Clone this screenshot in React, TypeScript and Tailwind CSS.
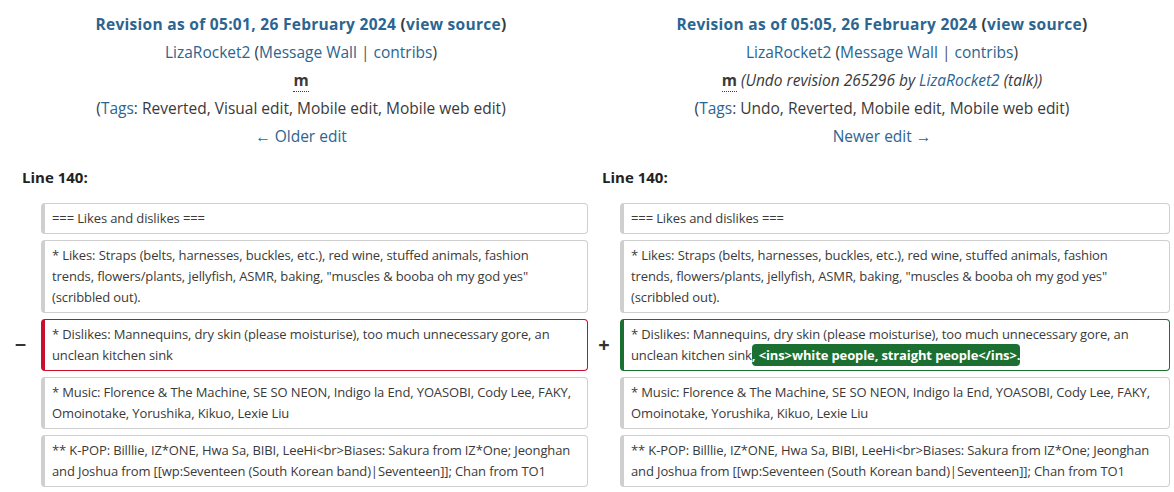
import React from "react";

type Side = {
  date: string;
  summary?: boolean;
  tags: string;
  nav: string;
};

const LINK = "text-[#2b6590]";

const left: Side = {
  date: "05:01, 26 February 2024",
  tags: "Reverted, Visual edit, Mobile edit, Mobile web edit",
  nav: "← Older edit",
};

const right: Side = {
  date: "05:05, 26 February 2024",
  summary: true,
  tags: "Undo, Reverted, Mobile edit, Mobile web edit",
  nav: "Newer edit →",
};

const RevisionHeader = ({ side, width }: { side: Side; width: string }) => (
  <div className={`${width} text-center text-[15.5px] leading-[28px] text-[#3a3a3a]`}>
    <div className="font-bold tracking-[0.3px]">
      <span className={LINK}>Revision as of {side.date}</span> (
      <span className={LINK}>view source</span>)
    </div>
    <div>
      <span className={LINK}>LizaRocket2</span> (<span className={LINK}>Message Wall</span>{" "}
      <span className="text-[#555]">|</span> <span className={LINK}>contribs</span>)
    </div>
    <div>
      <abbr className="font-bold no-underline border-b border-dotted border-[#3a3a3a]" title="minor">
        m
      </abbr>
      {side.summary && (
        <span className="italic">
          {" "}
          (Undo revision 265296 by <span className={LINK}>LizaRocket2</span> (talk))
        </span>
      )}
    </div>
    <div>
      (<span className={LINK}>Tags</span>: {side.tags})
    </div>
    <div className={LINK}>{side.nav}</div>
  </div>
);

type Kind = "ctx" | "del" | "add";

const boxStyles: Record<Kind, string> = {
  ctx: "border-[#cfcfcf] border-l-[#cfcfcf]",
  del: "border-[#c8102e] border-l-[#c8102e]",
  add: "border-[#1b6f31] border-l-[#1b6f31]",
};

const Box = ({ kind, children }: { kind: Kind; children: React.ReactNode }) => (
  <div
    className={`rounded-[4px] border border-l-4 px-[7px] py-[4px] text-[13px] leading-[21px] tracking-[-0.12px] text-[#3a3a3a] ${boxStyles[kind]}`}
  >
    {children}
  </div>
);

// lines are broken where the wiki diff wraps them
const Lines = ({ lines }: { lines: string[] }) => (
  <>
    {lines.map((l, i) => (
      <span key={i} className="block whitespace-nowrap">
        {l}
      </span>
    ))}
  </>
);

const Marker = ({ sign }: { sign?: string }) => (
  <div className="flex items-center justify-center text-[20px] font-bold text-[#333]">{sign}</div>
);

const context = [
  ["=== Likes and dislikes ==="],
  [
    "* Likes: Straps (belts, harnesses, buckles, etc.), red wine, stuffed animals, fashion",
    'trends, flowers/plants, jellyfish, ASMR, baking, "muscles & booba oh my god yes"',
    "(scribbled out).",
  ],
];

const after = [
  [
    "* Music: Florence & The Machine, SE SO NEON, Indigo la End, YOASOBI, Cody Lee, FAKY,",
    "Omoinotake, Yorushika, Kikuo, Lexie Liu",
  ],
  [
    "** K-POP: Billlie, IZ*ONE, Hwa Sa, BIBI, LeeHi<br>Biases: Sakura from IZ*One; Jeonghan",
    "and Joshua from [[wp:Seventeen (South Korean band)|Seventeen]]; Chan from TO1",
  ],
];

const dislikes = [
  "* Dislikes: Mannequins, dry skin (please moisturise), too much unnecessary gore, an",
  "unclean kitchen sink",
];

export default function App() {
  return (
    <div className="w-[1174px] h-[492px] overflow-hidden bg-white font-['Open_Sans','Liberation_Sans',sans-serif]">
      <div className="flex pt-[10px]">
        <RevisionHeader side={left} width="w-[602px]" />
        <RevisionHeader side={right} width="w-[560px]" />
      </div>

      <div className="grid grid-cols-[41px_547px_32px_550px] gap-y-[6px] mt-[16px]">
        <div className="col-span-2 pl-[22px] pb-[8px] text-[15px] font-bold text-[#222]">Line 140:</div>
        <div className="col-span-2 pl-[14px] pb-[8px] text-[15px] font-bold text-[#222]">Line 140:</div>

        {context.map((t, i) => (
          <React.Fragment key={i}>
            <Marker />
            <Box kind="ctx">
              <Lines lines={t} />
            </Box>
            <Marker />
            <Box kind="ctx">
              <Lines lines={t} />
            </Box>
          </React.Fragment>
        ))}

        <Marker sign="−" />
        <Box kind="del">
          <Lines lines={dislikes} />
        </Box>
        <Marker sign="+" />
        <Box kind="add">
          <span className="block whitespace-nowrap">{dislikes[0]}</span>
          <span className="block whitespace-nowrap">
            {dislikes[1]}
            <span className="rounded-[4px] bg-[#1b6f31] py-[2px] font-bold text-white">
              , &lt;ins&gt;white people, straight people&lt;/ins&gt;.
            </span>
          </span>
        </Box>

        {after.map((t, i) => (
          <React.Fragment key={i}>
            <Marker />
            <Box kind="ctx">
              <Lines lines={t} />
            </Box>
            <Marker />
            <Box kind="ctx">
              <Lines lines={t} />
            </Box>
          </React.Fragment>
        ))}
      </div>
    </div>
  );
}
